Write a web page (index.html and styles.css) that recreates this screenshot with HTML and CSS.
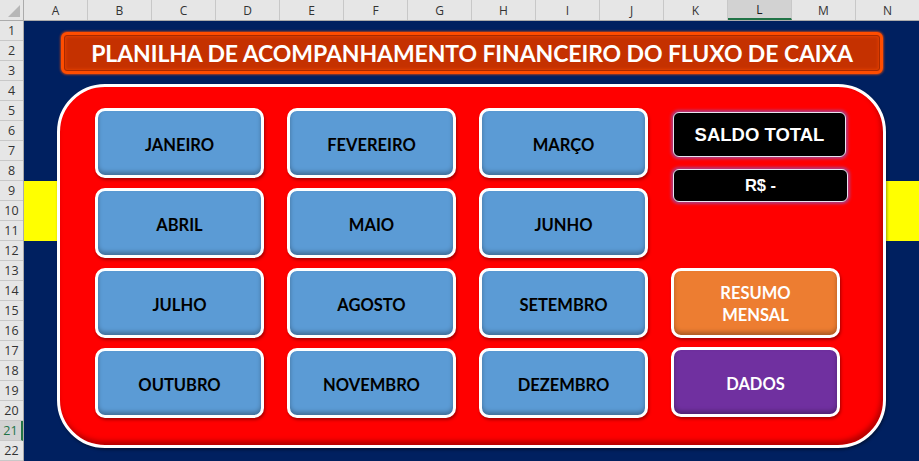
FILE: index.html
```html
<!DOCTYPE html>
<html lang="pt">
<head>
<meta charset="utf-8">
<title>Planilha de Acompanhamento Financeiro</title>
<link rel="stylesheet" href="styles.css">
</head>
<body>
<div class="app">
  <div class="corner"><span class="tri"></span></div>
  <div class="colheads">
    <div class="ch">A</div><div class="ch">B</div><div class="ch">C</div><div class="ch">D</div>
    <div class="ch">E</div><div class="ch">F</div><div class="ch">G</div><div class="ch">H</div>
    <div class="ch">I</div><div class="ch">J</div><div class="ch">K</div><div class="ch sel">L</div>
    <div class="ch">M</div><div class="ch">N</div>
  </div>
  <div class="rowheads">
    <div class="rh">1</div><div class="rh">2</div><div class="rh">3</div><div class="rh">4</div>
    <div class="rh">5</div><div class="rh">6</div><div class="rh">7</div><div class="rh">8</div>
    <div class="rh">9</div><div class="rh">10</div><div class="rh">11</div><div class="rh">12</div>
    <div class="rh">13</div><div class="rh">14</div><div class="rh">15</div><div class="rh">16</div>
    <div class="rh">17</div><div class="rh">18</div><div class="rh">19</div><div class="rh">20</div>
    <div class="rh sel">21</div><div class="rh">22</div>
  </div>
  <div class="sheet">
    <div class="band"></div>
    <div class="banner"><span>PLANILHA DE ACOMPANHAMENTO FINANCEIRO DO FLUXO DE CAIXA</span></div>
    <div class="panel">
      <div class="btn month">JANEIRO</div>
      <div class="btn month">FEVEREIRO</div>
      <div class="btn month">MARÇO</div>
      <div class="saldo">
        <div class="box title">SALDO TOTAL</div>
        <div class="box value">R$ -</div>
      </div>
      <div class="btn month">ABRIL</div>
      <div class="btn month">MAIO</div>
      <div class="btn month">JUNHO</div>
      <div class="btn month">JULHO</div>
      <div class="btn month">AGOSTO</div>
      <div class="btn month">SETEMBRO</div>
      <div class="btn resumo">RESUMO<br>MENSAL</div>
      <div class="btn month">OUTUBRO</div>
      <div class="btn month">NOVEMBRO</div>
      <div class="btn month">DEZEMBRO</div>
      <div class="btn dados">DADOS</div>
    </div>
  </div>
</div>
</body>
</html>
```
FILE: styles.css
```css
html, body {
  margin: 0;
  padding: 0;
  width: 919px;
  height: 461px;
  overflow: hidden;
  background: #ffffff;
}
.app {
  display: grid;
  grid-template-columns: 24px 896px;
  grid-template-rows: 21px 440px;
  width: 920px;
  height: 461px;
  font-family: "Open Sans", "Noto Sans", sans-serif;
}
.corner {
  background: #e6e6e6;
  border-right: 1px solid #ababab;
  border-bottom: 1px solid #ababab;
  box-sizing: border-box;
  position: relative;
}
.tri {
  position: absolute;
  right: 3px;
  bottom: 3px;
  width: 0;
  height: 0;
  border-left: 12px solid transparent;
  border-bottom: 12px solid #b7b7b7;
}
.colheads {
  display: grid;
  grid-template-columns: repeat(14, 64px);
  background: #e6e6e6;
  border-bottom: 1px solid #ababab;
  box-sizing: border-box;
}
.ch {
  border-right: 1px solid #c8c8c8;
  font-size: 12px;
  color: #333;
  display: flex;
  align-items: center;
  justify-content: center;
  padding-top: 1px;
}
.ch.sel {
  background: #d2d2d2;
  border-bottom: 2px solid #217346;
  color: #1a1a1a;
}
.rowheads {
  display: grid;
  grid-template-rows: repeat(22, 20px);
  background: #e6e6e6;
  border-right: 1px solid #ababab;
  box-sizing: border-box;
}
.rh {
  border-bottom: 1px solid #c8c8c8;
  font-size: 12.5px;
  color: #333;
  display: flex;
  align-items: center;
  justify-content: center;
  box-sizing: border-box;
}
.rh.sel {
  background: #d2d2d2;
  border-right: 2px solid #217346;
  color: #217346;
}
.sheet {
  position: relative;
  background: #002060;
  overflow: hidden;
}
.band {
  margin-top: 160px;
  height: 60px;
  background: #ffff00;
}
.banner {
  position: absolute;
  left: 37px;
  top: 11px;
  width: 822px;
  height: 42px;
  box-sizing: border-box;
  border-radius: 6px;
  background: #c53100;
  border: 3px solid #ff4d00;
  box-shadow: inset 0 0 0 1px #a82a00, inset 0 0 3px 2px #e04000, 0 0 2px 1px rgba(255, 80, 0, 0.6);
  display: flex;
  align-items: center;
  justify-content: center;
}
.banner span {
  font-family: "Lato", "Open Sans", sans-serif;
  font-weight: 700;
  font-size: 23px;
  letter-spacing: -0.1px;
  color: #ffffff;
  white-space: nowrap;
}
.panel {
  position: absolute;
  left: 33px;
  top: 63px;
  width: 829px;
  height: 364px;
  box-sizing: border-box;
  border: 3px solid #ffffff;
  border-radius: 48px;
  background: #ff0000;
  box-shadow: inset -2px -4px 5px rgba(90, 0, 0, 0.45), 1px 2px 3px rgba(0, 0, 0, 0.4);
  padding: 21px 0 0 35px;
  display: grid;
  grid-template-columns: 169px 169px 169px 169px;
  grid-template-rows: repeat(4, 70px);
  column-gap: 23px;
  row-gap: 10px;
}
.btn {
  box-sizing: border-box;
  border: 3px solid #ffffff;
  border-radius: 10px;
  display: flex;
  align-items: center;
  justify-content: center;
  text-align: center;
  font-family: "Lato", "Open Sans", sans-serif;
  font-weight: 700;
  font-size: 16.5px;
  line-height: 22px;
  padding-top: 3px;
  box-shadow: inset 0 -3px 4px rgba(0, 0, 0, 0.28), 1px 2px 3px rgba(80, 0, 0, 0.5);
}
.month {
  background: #5b9bd5;
  color: #000000;
}
.resumo {
  background: #ed7d31;
  color: #ffffff;
  padding-top: 1px;
}
.dados {
  background: #7030a0;
  color: #ffffff;
  margin-top: -1px;
  margin-bottom: 1px;
}
.saldo {
  grid-row: 1 / span 2;
  grid-column: 4;
  display: flex;
  flex-direction: column;
  padding: 4px 0 0 2px;
  gap: 12px;
}
.box {
  background: #000000;
  color: #ffffff;
  font-family: "Liberation Sans", Arial, sans-serif;
  font-weight: 700;
  border: 1px solid #e9e3f0;
  border-radius: 6px;
  box-shadow: 0 0 3px 2px rgba(150, 80, 170, 0.75);
  display: flex;
  align-items: center;
  justify-content: center;
  box-sizing: border-box;
}
.box.title {
  width: 173px;
  height: 45px;
  font-size: 18.5px;
}
.box.value {
  width: 175px;
  height: 33px;
  font-size: 16.5px;
}
```
